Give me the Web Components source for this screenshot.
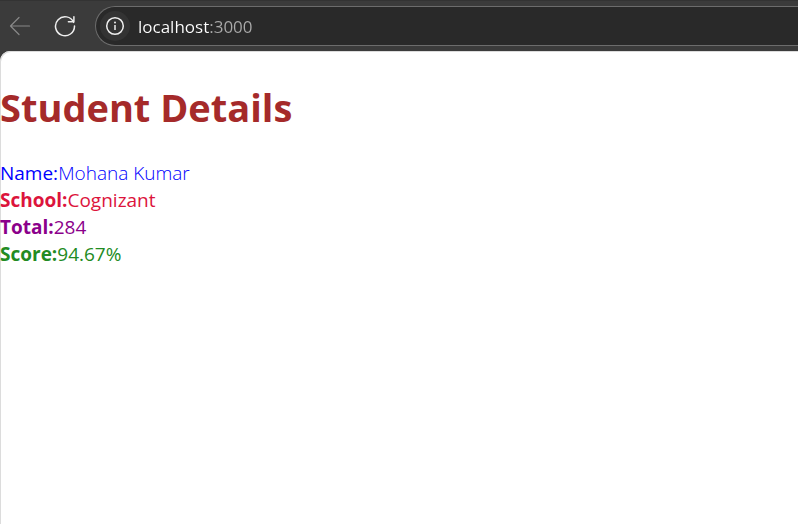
<!DOCTYPE html>
<html lang="en">
<head>
<meta charset="utf-8">
<title>Student Details</title>
<style>
body { margin: 0; background: #3b3b3b; font-family: "Open Sans", "Noto Sans", sans-serif; }
</style>
</head>
<body>
<browser-window>
  <browser-toolbar slot="toolbar"></browser-toolbar>
  <student-details heading="Student Details">
    <detail-row label="Name:" tone="blue" light>Mohana Kumar</detail-row>
    <detail-row label="School:" tone="crimson">Cognizant</detail-row>
    <detail-row label="Total:" tone="darkmagenta">284</detail-row>
    <detail-row label="Score:" tone="forestgreen">94.67%</detail-row>
  </student-details>
</browser-window>
<script>
class BrowserWindow extends HTMLElement {
  constructor() {
    super();
    this.attachShadow({ mode: "open" }).innerHTML = `
      <style>
        :host { display: flex; flex-direction: column; min-height: 100vh; }
        main { flex: 1; background: #fff; box-shadow: inset 1px 1px 0 #dcdcdc; border-top-left-radius: 10px; box-sizing: border-box; }
      </style>
      <slot name="toolbar"></slot>
      <main><slot></slot></main>`;
  }
}
class BrowserToolbar extends HTMLElement {
  constructor() {
    super();
    this.attachShadow({ mode: "open" }).innerHTML = `
      <style>
        :host { display: flex; align-items: center; gap: 15px; padding: 5px 0 5px 5px; background: #3b3b3b; border-top: 1px solid #333; }
        button { display: grid; place-items: center; width: 30px; height: 30px; padding: 0; border: 0; background: none; border-radius: 6px; flex: none; }
        svg { display: block; fill: none; }
        .address { flex: 1; display: flex; align-items: center; gap: 8px; height: 40px; box-sizing: border-box; padding-left: 4px; background: #292929; border: 1px solid #6c6c6c; border-right: 0; border-radius: 20px 0 0 20px; }
        .address button { width: 30px; height: 30px; border-radius: 50%; background: #333; }
        input { flex: 1; min-width: 0; height: 30px; padding: 0; border: 0; outline: 0; font: 17px "Open Sans", "Noto Sans", sans-serif; color: transparent; caret-color: #fff; background: linear-gradient(to right, #fff 71px, #aaa 71px); background-clip: text; -webkit-background-clip: text; }
      </style>
      <button aria-label="Back" disabled><svg width="22" height="22" viewBox="0 0 22 22" stroke="#888" stroke-width="1.2" stroke-linecap="round" stroke-linejoin="round"><path d="M20.5 11H1.5M10 2.5 1.5 11 10 19.5"/></svg></button>
      <button aria-label="Reload"><svg width="22" height="22" viewBox="0 0 22 22" stroke="#eee" stroke-width="1.5" stroke-linecap="round" stroke-linejoin="round"><path d="M19.7 7.4A9.5 9.5 0 1 0 20.5 11M19.9 1.7V6.7H14.4"/></svg></button>
      <div class="address">
        <button aria-label="View site information"><svg width="20" height="20" viewBox="0 0 20 20" stroke="#eee" stroke-width="1.5"><circle cx="10" cy="10" r="8.3"/><path d="M10 9V14"/><circle cx="10" cy="6.5" r="1" fill="#eee" stroke="none"/></svg></button>
        <input type="text" aria-label="Address" value="localhost:3000" spellcheck="false">
      </div>`;
  }
}
class StudentDetails extends HTMLElement {
  constructor() {
    super();
    this.attachShadow({ mode: "open" }).innerHTML = `
      <style>
        :host { display: block; padding-top: 28px; }
        h1 { margin: 0 0 25px; font-size: 38px; line-height: 56px; font-weight: 700; color: brown; }
      </style>
      <h1></h1>
      <slot></slot>`;
  }
  connectedCallback() {
    this.shadowRoot.querySelector("h1").textContent = this.getAttribute("heading");
  }
}
class DetailRow extends HTMLElement {
  constructor() {
    super();
    this.attachShadow({ mode: "open" }).innerHTML = `
      <style>
        :host { display: block; font-size: 19px; line-height: 27px; }
        b { font-weight: 700; }
        :host([light]) { font-weight: 300; }
        :host([light]) b { font-weight: 400; }
      </style>
      <b></b><slot></slot>`;
  }
  connectedCallback() {
    this.style.color = this.getAttribute("tone");
    this.shadowRoot.querySelector("b").textContent = this.getAttribute("label");
  }
}
customElements.define("browser-window", BrowserWindow);
customElements.define("browser-toolbar", BrowserToolbar);
customElements.define("student-details", StudentDetails);
customElements.define("detail-row", DetailRow);
</script>
</body>
</html>
